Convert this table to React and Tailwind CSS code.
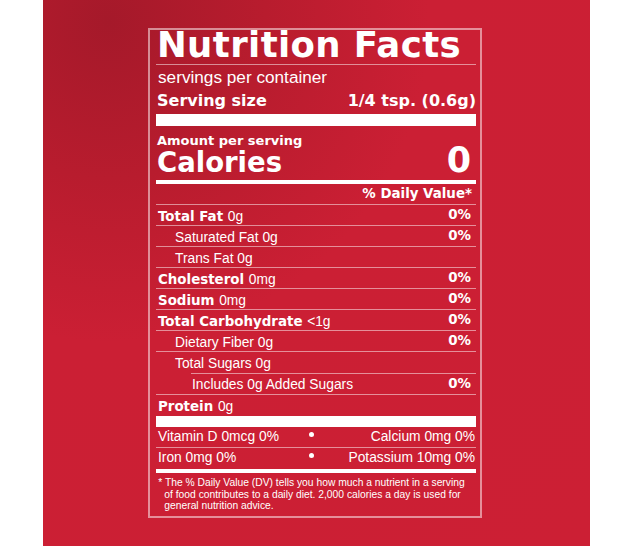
import React from "react";

const bold = "font-['DejaVu_Sans',sans-serif] font-bold";
const reg = "font-['Liberation_Sans',Arial,sans-serif] font-normal";

const rows = [
  { b: "Total Fat", r: "0g", dv: "0%" },
  { r: "Saturated Fat 0g", dv: "0%", indent: "pl-[19px]" },
  { r: "Trans Fat 0g", indent: "pl-[19px]" },
  { b: "Cholesterol", r: "0mg", dv: "0%" },
  { b: "Sodium", r: "0mg", dv: "0%" },
  { b: "Total Carbohydrate", r: "<1g", dv: "0%" },
  { r: "Dietary Fiber 0g", dv: "0%", indent: "pl-[19px]" },
];

function Row({ b, r, dv, indent = "pl-[2px]", border = true, h = "h-[21.1px]" }) {
  return (
    <div
      className={`flex items-center justify-between pr-[5px] ${h} ${indent} ${
        border ? "border-b border-white/50" : ""
      }`}
    >
      <span className="whitespace-nowrap">
        {b && <span className={`${bold} text-[13.4px]`}>{b} </span>}
        <span className={`${reg} text-[13.8px]`}>{r}</span>
      </span>
      {dv && <span className={`${bold} text-[13.4px]`}>{dv}</span>}
    </div>
  );
}

export default function App() {
  return (
    <div className="w-[633px] h-[546px] bg-white overflow-hidden">
      <div className="mx-[43px] h-[546px] pt-[28px] pl-[105px] bg-[radial-gradient(circle_at_12%_4%,#a5192a_0%,#b81c2e_22%,#cb1f34_45%,#cc1f34_100%)]">
        <div className="w-[334px] h-[490px] border-2 border-white/50 pl-[6px] pr-[4px] text-white">
          <div className={`${bold} text-[35.5px] leading-[30px] tracking-[0.4px] pl-[1px] whitespace-nowrap`}>
            Nutrition Facts
          </div>
          <div className="mt-[4px] h-px bg-white/50" />
          <div className={`${reg} text-[17.2px] leading-[20px] mt-[2px] pl-[2px]`}>
            servings per container
          </div>
          <div className={`${bold} text-[16px] leading-[20px] mt-[4px] pl-[1px] flex justify-between`}>
            <span>Serving size</span>
            <span>1/4 tsp. (0.6g)</span>
          </div>
          <div className="mt-[3px] h-[11.5px] bg-white" />
          <div className={`${bold} text-[13px] leading-[15px] mt-[7px] pl-[1px]`}>
            Amount per serving
          </div>
          <div className="flex justify-between items-baseline h-[26px] pl-[1px] pr-[5px]">
            <span className={`${bold} text-[27.5px] leading-[24px] mt-[2px]`}>Calories</span>
            <span className={`${bold} text-[35px] leading-[20px]`}>0</span>
          </div>
          <div className="mt-[6px] h-[4px] bg-white" />
          <div className={`${bold} text-[13.4px] h-[21.3px] flex items-center justify-end pr-[4px] border-b border-white/50`}>
            % Daily Value*
          </div>
          {rows.map((row, i) => (
            <Row key={i} {...row} />
          ))}
          <Row r="Total Sugars 0g" indent="pl-[19px]" border={false} h="h-[20.1px]" />
          <div className="ml-[35px] h-px bg-white/50" />
          <Row r="Includes 0g Added Sugars" dv="0%" indent="pl-[36px]" />
          <Row b="Protein" r="0g" border={false} />
          <div className="h-[11.5px] bg-white" />
          <div className={`${reg} text-[13.8px] flex items-center h-[21.1px] border-b border-white/50 pl-[2px] pr-[1px]`}>
            <span className="w-[151px] whitespace-nowrap">Vitamin D 0mcg 0%</span>
            <span className="w-[5px] h-[5px] rounded-full bg-white self-start mt-[5px]" />
            <span className="flex-1 text-right whitespace-nowrap">Calcium 0mg 0%</span>
          </div>
          <div className={`${reg} text-[13.8px] flex items-center h-[21px] pl-[2px] pr-[1px]`}>
            <span className="w-[151px] whitespace-nowrap">Iron 0mg 0%</span>
            <span className="w-[5px] h-[5px] rounded-full bg-white self-start mt-[5px]" />
            <span className="flex-1 text-right whitespace-nowrap">Potassium 10mg 0%</span>
          </div>
          <div className="h-[4px] bg-white" />
          <p className={`${reg} text-[10.3px] leading-[11.2px] mt-[4px] pl-[8.3px] -indent-[6px] whitespace-nowrap`}>
            * The % Daily Value (DV) tells you how much a nutrient in a serving
            <br />
            of food contributes to a daily diet. 2,000 calories a day is used for
            <br />
            general nutrition advice.
          </p>
        </div>
      </div>
    </div>
  );
}
